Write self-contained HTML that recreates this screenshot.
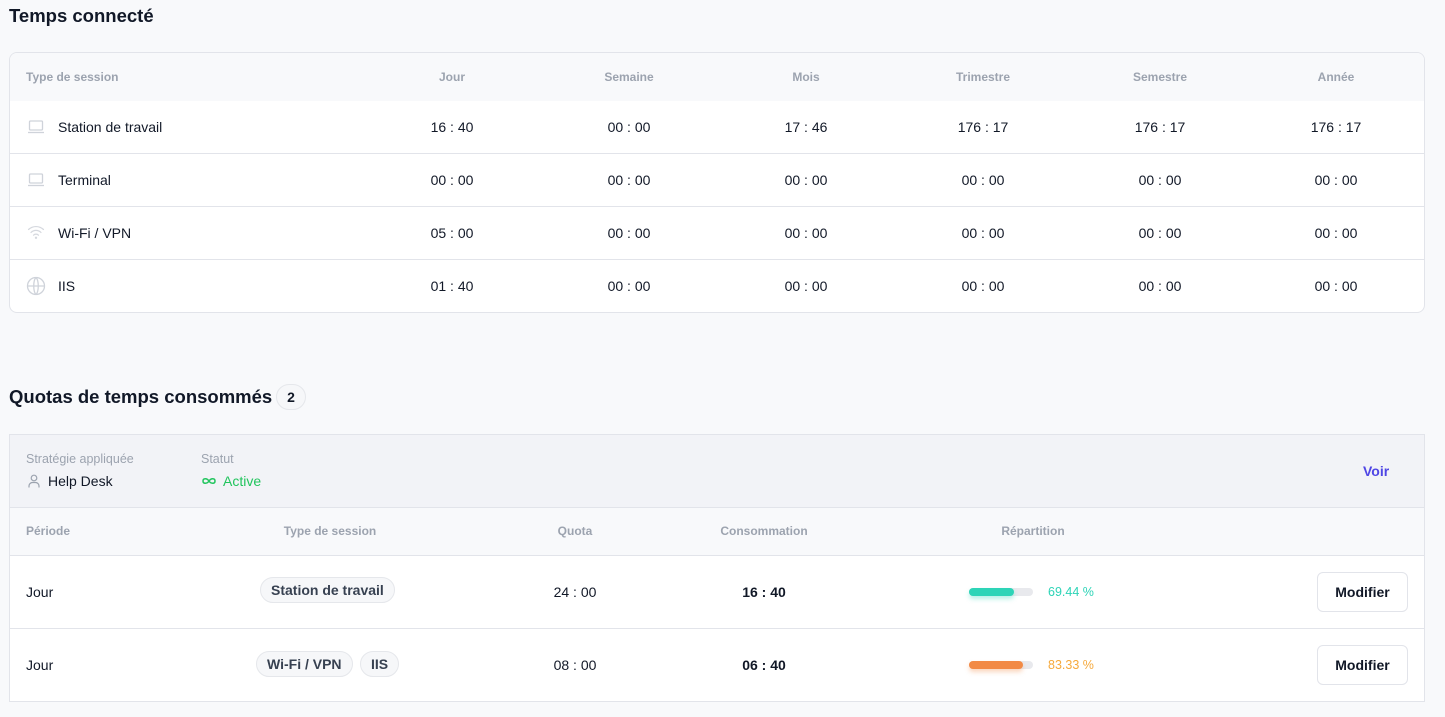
<!DOCTYPE html>
<html><head><meta charset="utf-8"><style>
*{box-sizing:border-box;margin:0;padding:0}
body{width:1445px;height:717px;background:#f8f9fb;font-family:"Liberation Sans",sans-serif;color:#111827;position:relative;overflow:hidden}
.a{position:absolute}
.h1{font-size:18.5px;font-weight:bold;color:#111827}
.th{font-size:12px;color:#9ca3af;font-weight:bold}
.c{transform:translateX(-50%);white-space:nowrap}
.t{font-size:14px}
.row{position:absolute;left:0;right:0;border-top:1px solid #e2e4ea}
.pill{position:absolute;top:50%;transform:translateY(-50%);border:1px solid #e5e7eb;background:#f6f7f9;border-radius:13px;height:26px;font-size:14px;line-height:24px;padding:0 10px;color:#374151;font-weight:bold;white-space:nowrap}
.btn{position:absolute;left:1307px;width:91px;height:40px;border:1px solid #e2e4ea;border-radius:6px;background:#fff;font-size:14px;font-weight:bold;text-align:center;line-height:38px}
.bar{position:absolute;left:959px;width:64px;height:8px;border-radius:4px;background:#e8e9ed}
.bar i{display:block;height:8px;border-radius:4px}
</style></head><body>
<div class="a h1" style="left:9px;top:5px">Temps connecté</div>
<div class="a" style="left:9px;top:52px;width:1416px;height:261px;border:1px solid #e2e4ea;border-radius:8px;background:#fff;overflow:hidden">
 <div class="a" style="left:0;top:0;right:0;height:48px;background:#f8f9fb"></div>
 <div class="a th" style="left:16px;top:17px">Type de session</div>
 <div class="a th c" style="left:442px;top:17px">Jour</div>
 <div class="a th c" style="left:619px;top:17px">Semaine</div>
 <div class="a th c" style="left:796px;top:17px">Mois</div>
 <div class="a th c" style="left:973px;top:17px">Trimestre</div>
 <div class="a th c" style="left:1150px;top:17px">Semestre</div>
 <div class="a th c" style="left:1326px;top:17px">Année</div>
 <div class="row" style="top:48px;border-top:none;height:52px">
  <svg class="a" style="left:17px;top:18px" width="18" height="16" viewBox="0 0 18 16" fill="none" stroke="#cfd3da" stroke-width="1.3"><rect x="2.5" y="2" width="13" height="9" rx="1"/><path d="M1 13.5h16"/></svg>
  <div class="a t" style="left:48px;top:18px">Station de travail</div>
  <div class="a t c" style="left:442px;top:18px">16 : 40</div><div class="a t c" style="left:619px;top:18px">00 : 00</div><div class="a t c" style="left:796px;top:18px">17 : 46</div><div class="a t c" style="left:973px;top:18px">176 : 17</div><div class="a t c" style="left:1150px;top:18px">176 : 17</div><div class="a t c" style="left:1326px;top:18px">176 : 17</div>
 </div>
 <div class="row" style="top:100px;height:53px">
  <svg class="a" style="left:17px;top:18px" width="18" height="16" viewBox="0 0 18 16" fill="none" stroke="#cfd3da" stroke-width="1.3"><rect x="2.5" y="2" width="13" height="9" rx="1"/><path d="M1 13.5h16"/></svg>
  <div class="a t" style="left:48px;top:18px">Terminal</div>
  <div class="a t c" style="left:442px;top:18px">00 : 00</div><div class="a t c" style="left:619px;top:18px">00 : 00</div><div class="a t c" style="left:796px;top:18px">00 : 00</div><div class="a t c" style="left:973px;top:18px">00 : 00</div><div class="a t c" style="left:1150px;top:18px">00 : 00</div><div class="a t c" style="left:1326px;top:18px">00 : 00</div>
 </div>
 <div class="row" style="top:153px;height:53px">
  <svg class="a" style="left:17px;top:17px" width="18" height="16" viewBox="0 0 18 16" fill="none" stroke="#d5d8de" stroke-width="1.2" stroke-linecap="round"><path d="M1.5 5.5a11 11 0 0 1 15 0M4 8.5a7 7 0 0 1 10 0M6.5 11.2a3.5 3.5 0 0 1 5 0"/><circle cx="9" cy="13.8" r=".6" fill="#d5d8de"/></svg>
  <div class="a t" style="left:48px;top:18px">Wi-Fi / VPN</div>
  <div class="a t c" style="left:442px;top:18px">05 : 00</div><div class="a t c" style="left:619px;top:18px">00 : 00</div><div class="a t c" style="left:796px;top:18px">00 : 00</div><div class="a t c" style="left:973px;top:18px">00 : 00</div><div class="a t c" style="left:1150px;top:18px">00 : 00</div><div class="a t c" style="left:1326px;top:18px">00 : 00</div>
 </div>
 <div class="row" style="top:206px;height:53px">
  <svg class="a" style="left:16px;top:16px" width="20" height="20" viewBox="0 0 20 20" fill="none" stroke="#cfd3da" stroke-width="1.3"><circle cx="10" cy="10" r="8.5"/><path d="M1.5 10h17M10 1.5c-3 3-3 14 0 17M10 1.5c3 3 3 14 0 17"/></svg>
  <div class="a t" style="left:48px;top:18px">IIS</div>
  <div class="a t c" style="left:442px;top:18px">01 : 40</div><div class="a t c" style="left:619px;top:18px">00 : 00</div><div class="a t c" style="left:796px;top:18px">00 : 00</div><div class="a t c" style="left:973px;top:18px">00 : 00</div><div class="a t c" style="left:1150px;top:18px">00 : 00</div><div class="a t c" style="left:1326px;top:18px">00 : 00</div>
 </div>
</div>

<div class="a h1" style="left:9px;top:386px">Quotas de temps consommés</div>
<div class="a" style="left:276px;top:384px;width:30px;height:26px;border:1px solid #e5e7eb;border-radius:13px;background:#f6f7f9;font-size:14px;font-weight:bold;text-align:center;line-height:24px">2</div>

<div class="a" style="left:9px;top:434px;width:1416px;height:268px;border:1px solid #e2e4ea;background:#fff">
 <div class="a" style="left:0;top:0;right:0;height:73px;background:#f2f3f7;border-bottom:1px solid #e2e4ea"></div>
 <div class="a" style="left:16px;top:17px;font-size:12.5px;color:#9ca3af">Stratégie appliquée</div>
 <svg class="a" style="left:18px;top:39px" width="12" height="14" viewBox="0 0 12 14" fill="none" stroke="#9ca3af" stroke-width="1.2"><circle cx="6" cy="4" r="2.8"/><path d="M1 13.5v-1.5a3.5 3.5 0 0 1 3.5-3.5h3a3.5 3.5 0 0 1 3.5 3.5v1.5"/></svg>
 <div class="a t" style="left:38px;top:38px">Help Desk</div>
 <div class="a" style="left:191px;top:17px;font-size:12.5px;color:#9ca3af">Statut</div>
 <svg class="a" style="left:191px;top:41px" width="16" height="10" viewBox="0 0 16 10" fill="none" stroke="#22c55e" stroke-width="1.5"><path d="M8 5c-2-3-6-3-6 0s4 3 6 0 6-3 6 0-4 3-6 0"/></svg>
 <div class="a t" style="left:213px;top:38px;color:#22c55e">Active</div>
 <div class="a" style="left:1353px;top:28px;font-size:14px;font-weight:bold;color:#4f46e5">Voir</div>
 <div class="a" style="left:0;top:73px;right:0;height:48px;background:#f8f9fb"></div>
 <div class="a th" style="left:16px;top:89px">Période</div>
 <div class="a th c" style="left:320px;top:89px">Type de session</div>
 <div class="a th c" style="left:565px;top:89px">Quota</div>
 <div class="a th c" style="left:754px;top:89px">Consommation</div>
 <div class="a th c" style="left:1023px;top:89px">Répartition</div>
 <div class="row" style="top:120px;height:73px">
  <div class="a t" style="left:16px;top:28px">Jour</div>
  <div class="pill" style="left:250px;margin-top:-2px">Station de travail</div>
  <div class="a t c" style="left:565px;top:28px">24 : 00</div>
  <div class="a t c" style="left:754px;top:28px;font-weight:bold">16 : 40</div>
  <div class="bar" style="top:32px"><i style="width:45px;background:#2dd4b7;box-shadow:0 3px 5px rgba(45,212,183,.35)"></i></div>
  <div class="a" style="left:1038px;top:29px;font-size:12.5px;color:#2dd4b7">69.44 %</div>
  <div class="btn" style="top:16px">Modifier</div>
 </div>
 <div class="row" style="top:193px;height:74px">
  <div class="a t" style="left:16px;top:28px">Jour</div>
  <div class="pill" style="left:246px;margin-top:-2px">Wi-Fi / VPN</div>
  <div class="pill" style="left:350px;margin-top:-2px">IIS</div>
  <div class="a t c" style="left:565px;top:28px">08 : 00</div>
  <div class="a t c" style="left:754px;top:28px;font-weight:bold">06 : 40</div>
  <div class="bar" style="top:32px"><i style="width:54px;background:#f28a45;box-shadow:0 3px 5px rgba(242,138,69,.35)"></i></div>
  <div class="a" style="left:1038px;top:29px;font-size:12.5px;color:#f6a93b">83.33 %</div>
  <div class="btn" style="top:16px">Modifier</div>
 </div>
</div>
</body></html>
